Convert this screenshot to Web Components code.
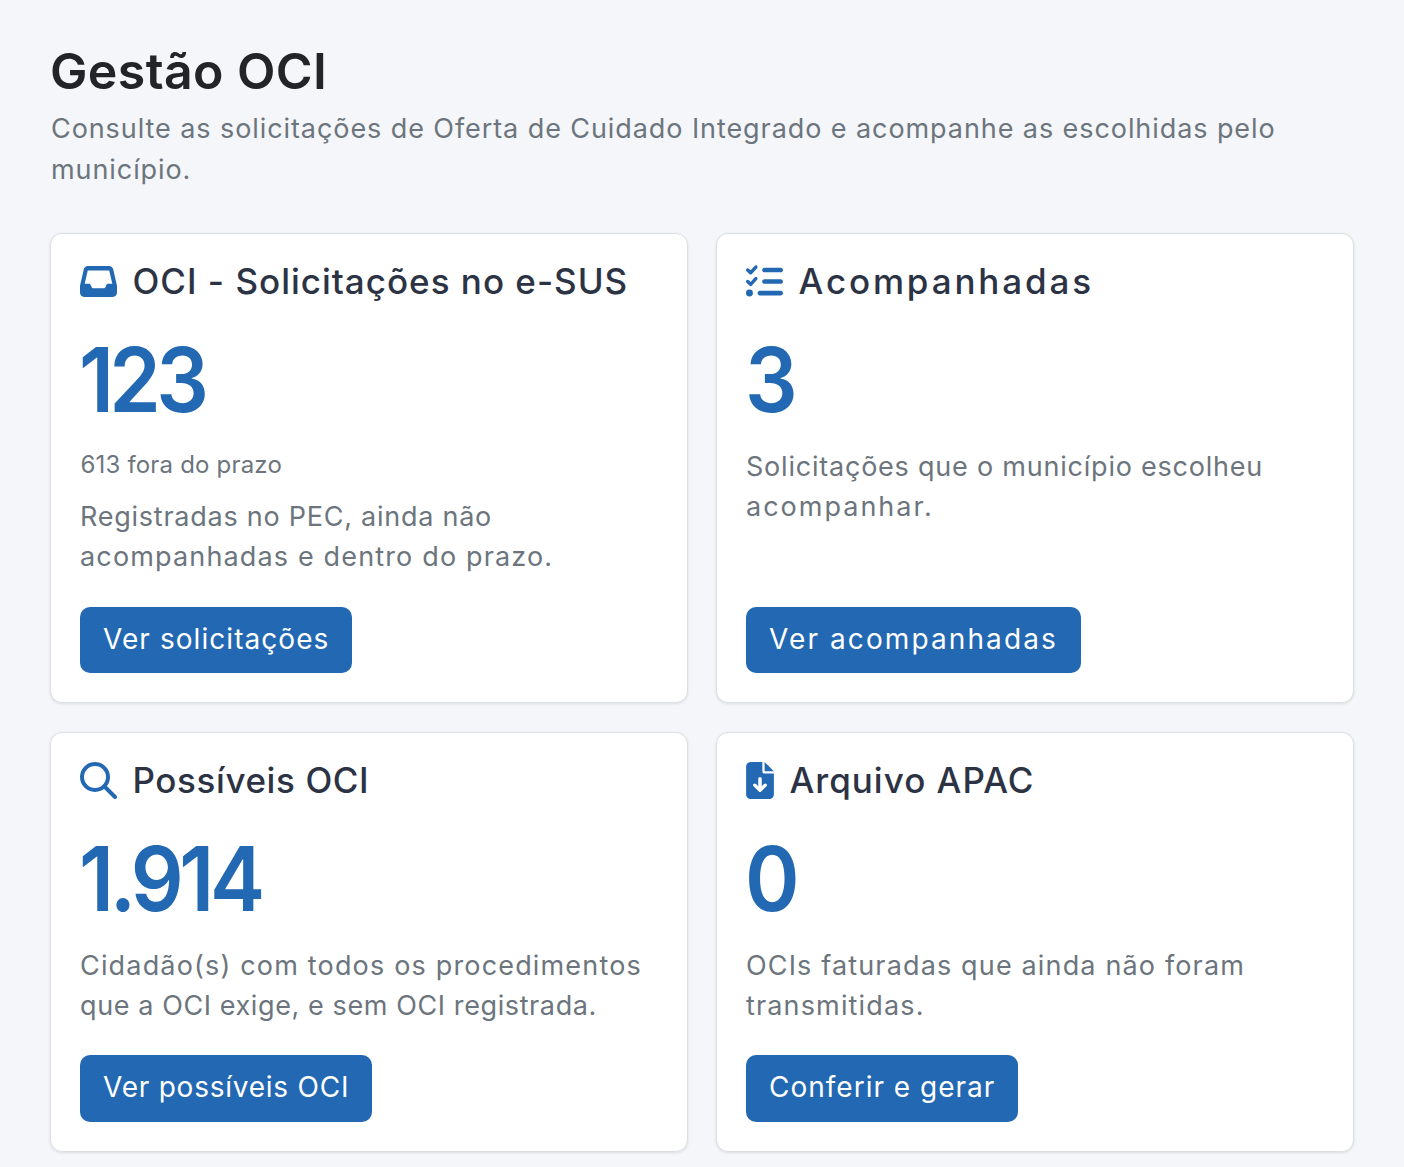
<!DOCTYPE html>
<html lang="pt-BR">
<head>
<meta charset="utf-8">
<title>Gestão OCI</title>
<style>
body { margin: 0; background: #f4f6f9; font-family: Inter, "Liberation Sans", sans-serif; }
stat-card span { display: block; }
</style>
</head>
<body>
<gestao-page>
  <page-header slot="header" title="Gestão OCI">Consulte as solicitações de Oferta de Cuidado Integrado e acompanhe as escolhidas pelo município.</page-header>
  <stat-card style="--title-ls:1px;--btn-ls:1.06px;--value-ls:-5.1px" icon="inbox" title="OCI - Solicitações no e-SUS" value="123" note="613 fora do prazo" action="Ver solicitações"><span style="letter-spacing:.75px">Registradas no PEC, ainda não</span> <span style="letter-spacing:1.15px">acompanhadas e dentro do prazo.</span></stat-card>
  <stat-card style="--title-ls:2.85px;--btn-ls:2.1px;--value-ls:-5.3px" icon="list" title="Acompanhadas" value="3" action="Ver acompanhadas"><span style="letter-spacing:.78px">Solicitações que o município escolheu</span> <span style="letter-spacing:2px">acompanhar.</span></stat-card>
  <stat-card style="--title-ls:.6px;--btn-ls:.76px;--value-ls:-4.76px" icon="search" title="Possíveis OCI" value="1.914" action="Ver possíveis OCI"><span style="letter-spacing:1.17px">Cidadão(s) com todos os procedimentos</span> <span style="letter-spacing:.6px">que a OCI exige, e sem OCI registrada.</span></stat-card>
  <stat-card style="--title-ls:1px;--btn-ls:1px;--value-ls:-5.3px" icon="file" title="Arquivo APAC" value="0" action="Conferir e gerar"><span style="letter-spacing:1.15px">OCIs faturadas que ainda não foram</span> <span style="letter-spacing:1.15px">transmitidas.</span></stat-card>
</gestao-page>
<script>
const ICONS = {
  inbox: '<svg width="37" height="31" viewBox="0 32 576 448" preserveAspectRatio="none"><path fill="currentColor" d="M121 32C91.6 32 66 52 58.9 80.5L1.9 308.4C.6 313.5 0 318.7 0 323.9V416c0 35.3 28.7 64 64 64H512c35.3 0 64-28.7 64-64V323.9c0-5.2-.6-10.4-1.9-15.5l-57-227.9C510 52 484.4 32 455 32H121zm0 64H455l48 192H438.9c-12.1 0-23.2 6.8-28.6 17.7l-14.3 28.6c-5.4 10.8-16.5 17.7-28.6 17.7H208.6c-12.1 0-23.2-6.8-28.6-17.7l-14.3-28.6c-5.4-10.8-16.5-17.7-28.6-17.7H73L121 96z"/></svg>',
  list: '<svg width="37" height="37" viewBox="0 0 512 512"><path fill="currentColor" d="M152.1 38.2c9.9 8.9 10.7 24 1.8 33.9l-72 80c-4.4 4.9-10.6 7.8-17.2 7.9s-12.9-2.4-17.6-7L7 113C-2.3 103.6-2.3 88.4 7 79s24.6-9.4 33.9 0l22.1 22.1 55.1-61.2c8.9-9.9 24-10.7 33.9-1.8zm0 160c9.9 8.9 10.7 24 1.8 33.9l-72 80c-4.4 4.9-10.6 7.8-17.2 7.9s-12.9-2.4-17.6-7L7 273c-9.4-9.4-9.4-24.6 0-33.9s24.6-9.4 33.9 0l22.1 22.1 55.1-61.2c8.9-9.9 24-10.7 33.9-1.8zM224 96c0-17.7 14.3-32 32-32H480c17.7 0 32 14.3 32 32s-14.3 32-32 32H256c-17.7 0-32-14.3-32-32zm0 160c0-17.7 14.3-32 32-32H480c17.7 0 32 14.3 32 32s-14.3 32-32 32H256c-17.7 0-32-14.3-32-32zM160 416c0-17.7 14.3-32 32-32H480c17.7 0 32 14.3 32 32s-14.3 32-32 32H192c-17.7 0-32-14.3-32-32zM48 368a48 48 0 1 1 0 96 48 48 0 1 1 0-96z"/></svg>',
  search: '<svg width="37" height="37" viewBox="0 0 37 37"><circle cx="15" cy="15" r="13" fill="none" stroke="currentColor" stroke-width="4"/><path d="M24.5 24.5L35 35" fill="none" stroke="currentColor" stroke-width="4" stroke-linecap="round"/></svg>',
  file: '<svg width="28" height="37" viewBox="0 0 384 512"><path fill="currentColor" d="M64 0C28.7 0 0 28.7 0 64V448c0 35.3 28.7 64 64 64H320c35.3 0 64-28.7 64-64V160H256c-17.7 0-32-14.3-32-32V0H64zM256 0V128H384L256 0zM216 232V334.1l31-31c9.4-9.4 24.6-9.4 33.9 0s9.4 24.6 0 33.9l-72 72c-9.4 9.4-24.6 9.4-33.9 0l-72-72c-9.4-9.4-9.4-24.6 0-33.9s24.6-9.4 33.9 0l31 31V232c0-13.3 10.7-24 24-24s24 10.7 24 24z"/></svg>'
};

class GestaoPage extends HTMLElement {
  constructor() {
    super();
    this.attachShadow({mode:'open'});
    this.shadowRoot.innerHTML = `
    <style>
      :host { display:block; padding:46px 50px 15px; }
      .grid { display:grid; grid-template-columns:1fr 1fr; gap:28.8px 28px; margin-top:43px; }
    </style>
    <slot name="header"></slot>
    <div class="grid"><slot></slot></div>
    `;
  }
}
customElements.define('gestao-page', GestaoPage);

class PageHeader extends HTMLElement {
  constructor() {
    super();
    this.attachShadow({mode:'open'});
    this.shadowRoot.innerHTML = `
    <style>
      :host { display:block; }
      h1 { margin:0; font-size:50px; line-height:50px; font-weight:600; color:#212529; letter-spacing:.4px; }
      p { margin:12px 0 0; font-size:27px; line-height:41px; color:#6c757d; padding-left:1px; letter-spacing:.92px; }
    </style>
    <h1></h1>
    <p><slot></slot></p>
    `;
    this.shadowRoot.querySelector('h1').textContent = this.getAttribute('title');
  }
}
customElements.define('page-header', PageHeader);

class StatCard extends HTMLElement {
  constructor() {
    super();
    this.attachShadow({mode:'open'});
    this.shadowRoot.innerHTML = `
    <style>
      :host { display:flex; flex-direction:column; box-sizing:border-box; background:#fff; border:1px solid #dcdfe3; border-radius:12px; padding:29px; box-shadow:0 1px 3px rgba(0,0,0,.1); }
      .head { display:flex; align-items:center; gap:15.5px; height:36px; color:#2268b2; }
      .head svg { flex:none; display:block; }
      h2 { margin:0; font-size:35px; line-height:36px; font-weight:500; color:#2b3345; letter-spacing:var(--title-ls); }
      .value { margin:31px 0 0 -1px; font-size:90px; line-height:100px; font-weight:600; color:#2268b2; letter-spacing:var(--value-ls); transform:scaleX(.92); transform-origin:left; }
      .note { margin-top:17px; padding-left:.5px; font-size:24px; line-height:36px; color:#6c757d; letter-spacing:.18px; }
      .note:empty { display:none; }
      p { margin:17px 0 29px; font-size:27px; line-height:40px; color:#6c757d; }
      .note:not(:empty) + p { margin:14px 0 30px; }
      a { margin-top:auto; align-self:flex-start; display:block; padding:0 23px; height:66.4px; line-height:65px; border-radius:10px; background:#2268b2; color:#fff; font-size:28px; text-decoration:none; letter-spacing:var(--btn-ls); }
    </style>
    <div class="head"><span id="icon"></span><h2></h2></div>
    <div class="value"></div>
    <div class="note"></div>
    <p><slot></slot></p>
    <a href="#"></a>
    `;
    const s = this.shadowRoot;
    s.getElementById('icon').innerHTML = ICONS[this.getAttribute('icon')];
    s.querySelector('h2').textContent = this.getAttribute('title');
    s.querySelector('.value').textContent = this.getAttribute('value');
    s.querySelector('.note').textContent = this.getAttribute('note') || '';
    s.querySelector('a').textContent = this.getAttribute('action');
  }
}
customElements.define('stat-card', StatCard);
</script>
</body>
</html>
